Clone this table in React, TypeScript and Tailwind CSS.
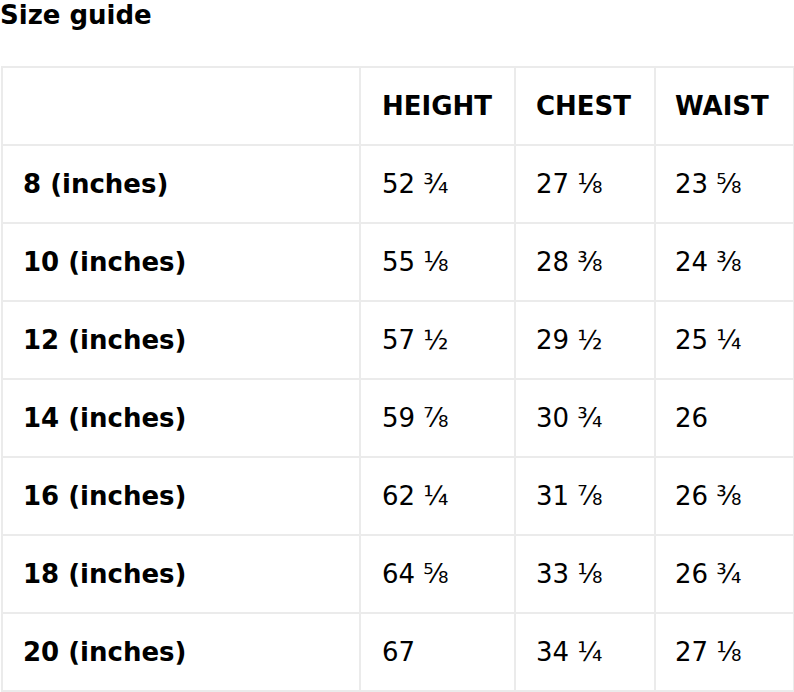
import React from "react";

const rows: [string, string, string, string][] = [
  ["8 (inches)", "52 ¾", "27 ⅛", "23 ⅝"],
  ["10 (inches)", "55 ⅛", "28 ⅜", "24 ⅜"],
  ["12 (inches)", "57 ½", "29 ½", "25 ¼"],
  ["14 (inches)", "59 ⅞", "30 ¾", "26"],
  ["16 (inches)", "62 ¼", "31 ⅞", "26 ⅜"],
  ["18 (inches)", "64 ⅝", "33 ⅛", "26 ¾"],
  ["20 (inches)", "67", "34 ¼", "27 ⅛"],
];

export default function App() {
  return (
    <div className="bg-white text-black w-[794px] h-[692px] overflow-hidden" style={{ fontFamily: '"DejaVu Sans", sans-serif' }}>
      <h2 className="text-[26px] font-bold leading-[30px] m-0 pt-0">Size guide</h2>
      <table className="mt-[36px] ml-px border-collapse table-fixed w-[792px] text-[26px] leading-none">
        <colgroup>
          <col className="w-[358px]" />
          <col className="w-[155px]" />
          <col className="w-[140px]" />
          <col className="w-[139px]" />
        </colgroup>
        <thead>
          <tr className="h-[78px]">
            <th className="border-2 border-[#ebebeb] text-left px-[20px]"></th>
            <th className="border-2 border-[#ebebeb] text-left pl-[21px] pr-0 font-bold">HEIGHT</th>
            <th className="border-2 border-[#ebebeb] text-left pl-[20px] pr-0 font-bold">CHEST</th>
            <th className="border-2 border-[#ebebeb] text-left pl-[19px] pr-0 font-bold">WAIST</th>
          </tr>
        </thead>
        <tbody>
          {rows.map((r) => (
            <tr key={r[0]} className="h-[78px]">
              <td className="border-2 border-[#ebebeb] px-[20px] font-bold">{r[0]}</td>
              <td className="border-2 border-[#ebebeb] pl-[21px] pr-0">{r[1]}</td>
              <td className="border-2 border-[#ebebeb] pl-[20px] pr-0">{r[2]}</td>
              <td className="border-2 border-[#ebebeb] pl-[19px] pr-0">{r[3]}</td>
            </tr>
          ))}
        </tbody>
      </table>
    </div>
  );
}
